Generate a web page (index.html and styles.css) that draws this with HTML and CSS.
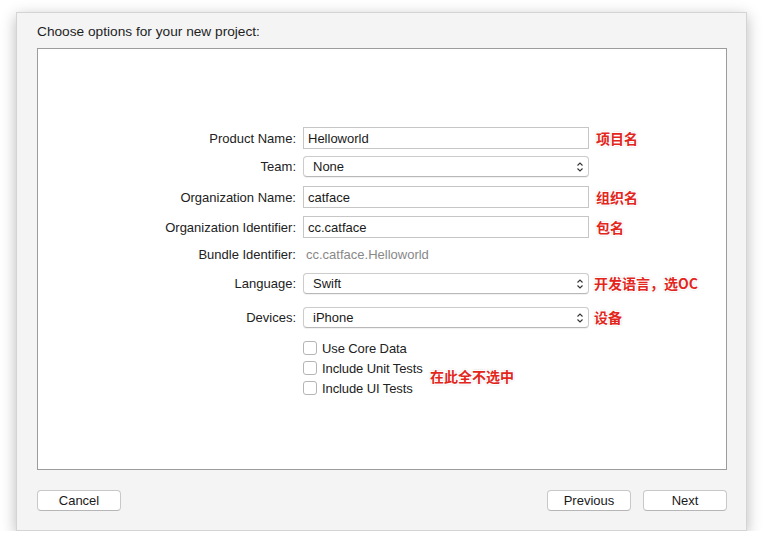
FILE: index.html
```html
<!DOCTYPE html>
<html>
<head>
<meta charset="utf-8">
<link rel="stylesheet" href="styles.css">
</head>
<body>
<div class="window">
  <div class="title">Choose options for your new project:</div>
  <div class="panel">
    <div class="form">
      <div class="row r1">
        <div class="label">Product Name:</div>
        <div class="field text">Helloworld</div>
        <div class="note">项目名</div>
      </div>
      <div class="row r2">
        <div class="label">Team:</div>
        <div class="field popup">None<svg class="chev" width="8" height="12" viewBox="0 0 8 12"><path d="M1.5 4.5 L4 2 L6.5 4.5 M1.5 7.5 L4 10 L6.5 7.5" fill="none" stroke="#333" stroke-width="1.1"/></svg></div>
      </div>
      <div class="row r3">
        <div class="label">Organization Name:</div>
        <div class="field text">catface</div>
        <div class="note">组织名</div>
      </div>
      <div class="row r4">
        <div class="label">Organization Identifier:</div>
        <div class="field text">cc.catface</div>
        <div class="note">包名</div>
      </div>
      <div class="row r5">
        <div class="label">Bundle Identifier:</div>
        <div class="value">cc.catface.Helloworld</div>
      </div>
      <div class="row r6">
        <div class="label">Language:</div>
        <div class="field popup">Swift<svg class="chev" width="8" height="12" viewBox="0 0 8 12"><path d="M1.5 4.5 L4 2 L6.5 4.5 M1.5 7.5 L4 10 L6.5 7.5" fill="none" stroke="#333" stroke-width="1.1"/></svg></div>
        <div class="note n2">开发语言，选OC</div>
      </div>
      <div class="row r7">
        <div class="label">Devices:</div>
        <div class="field popup">iPhone<svg class="chev" width="8" height="12" viewBox="0 0 8 12"><path d="M1.5 4.5 L4 2 L6.5 4.5 M1.5 7.5 L4 10 L6.5 7.5" fill="none" stroke="#333" stroke-width="1.1"/></svg></div>
        <div class="note n2">设备</div>
      </div>
      <div class="checks">
        <div class="check"><span class="box"></span>Use Core Data</div>
        <div class="check"><span class="box"></span>Include Unit Tests</div>
        <div class="check"><span class="box"></span>Include UI Tests</div>
        <div class="note check-note">在此全不选中</div>
      </div>
    </div>
  </div>
  <div class="buttons">
    <div class="btn">Cancel</div>
    <div class="right">
      <div class="btn">Previous</div>
      <div class="btn">Next</div>
    </div>
  </div>
</div>
</body>
</html>
```
FILE: styles.css
```css
html, body {
  margin: 0;
  padding: 0;
  background: #ffffff;
}
body {
  font-family: "Liberation Sans", Arial, sans-serif;
  font-size: 13px;
  color: #222;
}
.window {
  margin: 12px 0 0 16px;
  width: 731px;
  height: 519px;
  box-sizing: border-box;
  background: #f4f4f4;
  border: 1px solid #d4d4d4;
  box-shadow: 0 4px 14px rgba(0,0,0,0.28);
  padding: 0 19px 0 20px;
  display: flex;
  flex-direction: column;
}
.title {
  margin-top: 11px;
  height: 24px;
  line-height: 16px;
  font-size: 13.7px;
  color: #1e1e1e;
}
.panel {
  height: 422px;
  box-sizing: border-box;
  background: #fff;
  border: 1px solid #9c9c9c;
}
.form {
  padding-top: 78px;
}
.row {
  display: flex;
  align-items: center;
  height: 22px;
}
.label {
  width: 258px;
  text-align: right;
  padding-right: 7px;
  flex: none;
  color: #222;
}
.field {
  width: 286px;
  height: 22px;
  box-sizing: border-box;
  background: #fff;
  flex: none;
  display: flex;
  align-items: center;
  color: #1a1a1a;
}
.text {
  border: 1px solid #c6c6c6;
  padding-left: 4px;
}
.popup {
  border: 1px solid #cccccc;
  border-bottom-color: #b8b8b8;
  border-radius: 4px;
  padding-left: 9px;
  position: relative;
  height: 21px;
  box-shadow: 0 0.5px 1px rgba(0,0,0,0.06);
}
.chev {
  position: absolute;
  right: 4px;
  top: 4px;
}
.value {
  color: #888;
  padding-left: 3px;
}
.note {
  font-family: "Noto Sans CJK SC", sans-serif;
  font-weight: bold;
  font-size: 14px;
  color: #e3261c;
  padding-left: 7px;
  text-shadow: 0 0 1px #fff, 0 0 1px #fff, 1px 1px 0 #fff, -1px -1px 0 #fff, 1px -1px 0 #fff, -1px 1px 0 #fff, 0 0 3px rgba(0,0,0,0.4);
}
.n2 { padding-left: 5px; }
.r1 { margin-top: 0; }
.r2 { margin-top: 6px; }
.r3 { margin-top: 9px; }
.r4 { margin-top: 8px; }
.r5 { margin-top: 8px; height: 16px; }
.r6 { margin-top: 10px; }
.r7 { margin-top: 12px; }
.checks {
  margin-top: 10px;
  padding-left: 265px;
  position: relative;
}
.check {
  height: 20px;
  display: flex;
  align-items: center;
  color: #222;
  letter-spacing: -0.1px;
}
.box {
  width: 12px;
  height: 12px;
  border: 1px solid #b5b5b5;
  border-radius: 3px;
  background: #fff;
  margin-right: 5px;
  flex: none;
}
.check-note {
  position: absolute;
  left: 392px;
  top: 28px;
  padding-left: 0;
}
.buttons {
  margin-top: 20px;
  display: flex;
  justify-content: space-between;
}
.right {
  display: flex;
  gap: 12px;
}
.btn {
  width: 84px;
  height: 21px;
  box-sizing: border-box;
  background: #fff;
  border: 1px solid #c8c8c8;
  border-bottom-color: #b6b6b6;
  border-radius: 4px;
  text-align: center;
  line-height: 19px;
  color: #1a1a1a;
}
```
